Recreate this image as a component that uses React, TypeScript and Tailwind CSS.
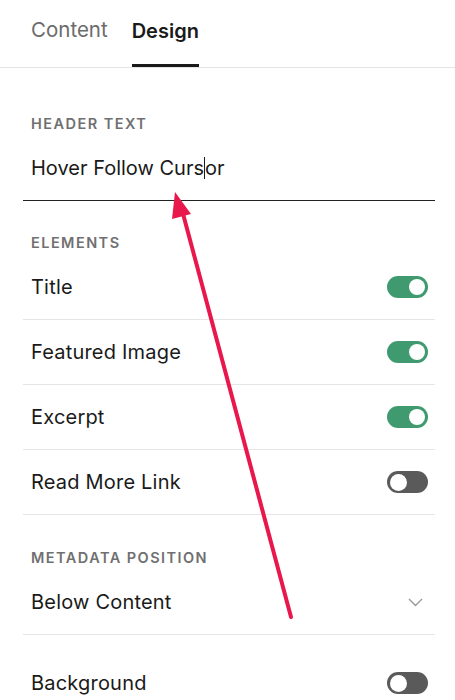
import React from 'react'

const font = { fontFamily: 'Inter, "Noto Sans", "Liberation Sans", sans-serif' }

function Toggle({ on }: { on: boolean }) {
  return on ? (
    <div className="w-[41px] h-[22px] rounded-full bg-[#3f9b6f] flex items-center justify-end pr-[3px]">
      <div className="w-[16px] h-[16px] rounded-full bg-white" />
    </div>
  ) : (
    <div className="w-[41px] h-[22px] rounded-full bg-[#5a5a5a] flex items-center pl-[3px]">
      <div className="w-[17px] h-[17px] rounded-full bg-white" />
    </div>
  )
}

function SectionLabel({ children, className = '' }: { children: React.ReactNode; className?: string }) {
  return (
    <div className={`h-4 flex items-center px-2 text-[14.5px] font-semibold tracking-[0.1em] text-[#707070] ${className}`}>
      {children}
    </div>
  )
}

function ToggleRow({ label, on }: { label: string; on: boolean }) {
  return (
    <div className="h-[65px] flex items-center justify-between px-2 pr-[7px] border-b border-[#e6e6e6]">
      <span className="text-[20px] tracking-[0.01em] text-[#1a1a1a]">{label}</span>
      <Toggle on={on} />
    </div>
  )
}

export default function App() {
  return (
    <div className="relative w-[455px] h-[700px] overflow-hidden bg-white" style={font}>
      {/* ── Tabs ── */}
      <div className="h-[68px] border-b border-[#e4e4e4] flex items-start gap-[24px] pl-[31px]">
        <div className="h-full flex items-center pb-[6px] text-[20.5px] text-[#6b6b6b]">Content</div>
        <div className="h-full flex items-center pt-[3px] pb-[6px] text-[20px] font-semibold text-[#1a1a1a] border-b-[3px] border-[#1a1a1a]">
          Design
        </div>
      </div>

      <div className="ml-[23px] mr-[20px]">
        {/* ── Header text ── */}
        <SectionLabel className="mt-[48px]">HEADER TEXT</SectionLabel>
        <div className="mt-[4px] h-[65px] flex items-center px-2 border-b-[1.5px] border-[#222]">
          <span className="text-[20px] text-[#1a1a1a] whitespace-pre flex items-center">
            <span>Hover Follow Curs</span>
            <span className="inline-block w-px h-[22px] bg-[#1a1a1a]" />
            <span>or</span>
          </span>
        </div>

        {/* ── Elements ── */}
        <SectionLabel className="mt-[34px]">ELEMENTS</SectionLabel>
        <div className="mt-[4px]">
          <ToggleRow label="Title" on />
          <ToggleRow label="Featured Image" on />
          <ToggleRow label="Excerpt" on />
          <ToggleRow label="Read More Link" on={false} />
        </div>

        {/* ── Metadata position ── */}
        <SectionLabel className="mt-[35px]">METADATA POSITION</SectionLabel>
        <div className="mt-[4px] h-[65px] flex items-center justify-between px-2 pr-[12px] border-b border-[#e6e6e6]">
          <span className="text-[20px] tracking-[0.01em] text-[#1a1a1a]">Below Content</span>
          <svg width="15" height="9" viewBox="0 0 15 9" fill="none" stroke="#9a9a9a" strokeWidth="1.4">
            <path d="M1 1l6.5 6.5L14 1" />
          </svg>
        </div>

        <div className="mt-[16px]">
          <ToggleRow label="Background" on={false} />
        </div>
      </div>

      {/* ── Annotation arrow ── */}
      <svg className="absolute inset-0 pointer-events-none" width="455" height="700" viewBox="0 0 455 700">
        <line x1="291" y1="617" x2="182" y2="210" stroke="#e9184c" strokeWidth="4" strokeLinecap="round" />
        <polygon points="175,192 172,219 191,214" fill="#e9184c" />
      </svg>
    </div>
  )
}
